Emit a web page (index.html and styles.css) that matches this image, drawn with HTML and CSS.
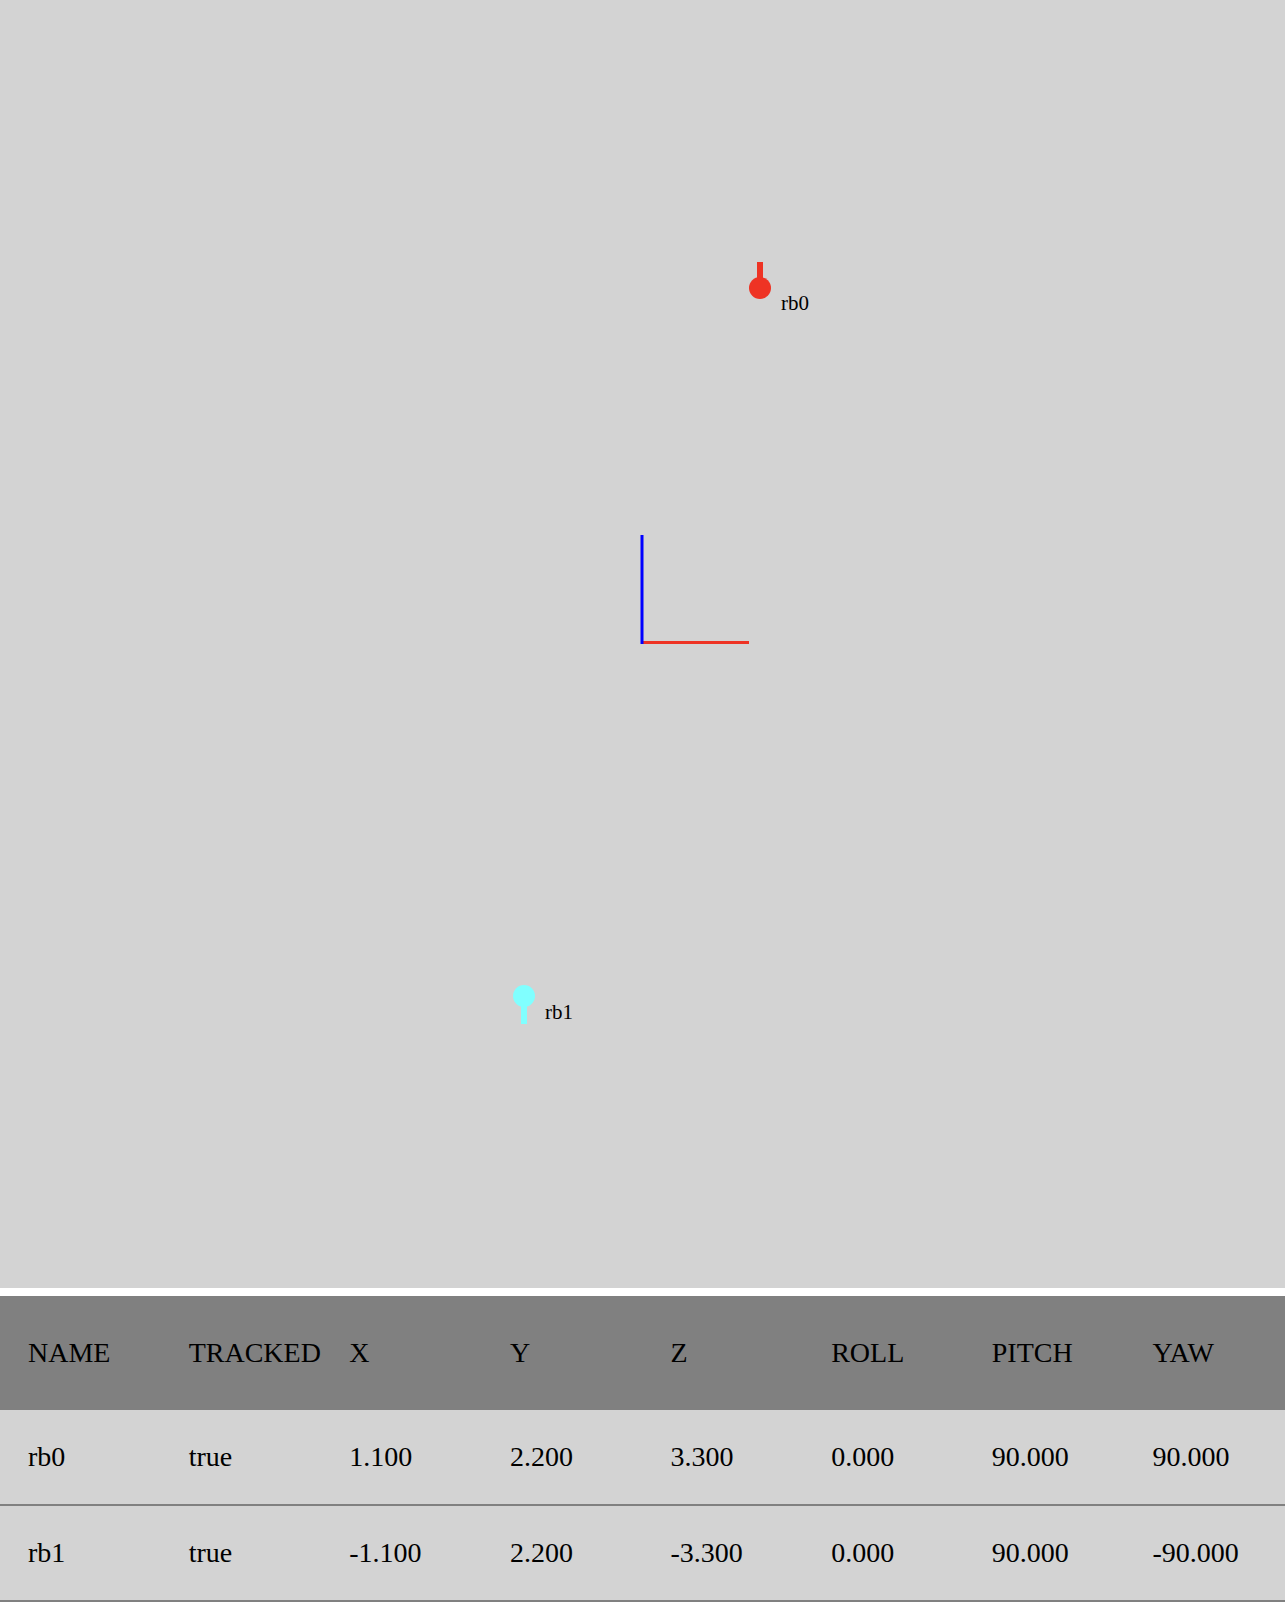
FILE: index.html
```html
<!DOCTYPE html>
<html>
<head>
<meta charset="utf-8">
<title>Rigid Bodies</title>
<link rel="stylesheet" href="styles.css">
</head>
<body>
<div class="viewport">
  <svg class="scene" width="1285" height="1288" viewBox="0 0 1285 1288" xmlns="http://www.w3.org/2000/svg">
    <line class="axis-x" x1="642" y1="642.5" x2="749" y2="642.5"/>
    <line class="axis-z" x1="642" y1="535" x2="642" y2="644"/>
    <g class="body body-0">
      <line x1="760" y1="262" x2="760" y2="288"/>
      <circle cx="760" cy="288" r="11"/>
    </g>
    <text class="label" x="781" y="310">rb0</text>
    <g class="body body-1">
      <line x1="524" y1="996" x2="524" y2="1024"/>
      <circle cx="524" cy="996" r="11"/>
    </g>
    <text class="label" x="545" y="1019">rb1</text>
  </svg>
</div>
<table class="bodies">
  <thead>
    <tr>
      <th>NAME</th><th>TRACKED</th><th>X</th><th>Y</th><th>Z</th><th>ROLL</th><th>PITCH</th><th>YAW</th>
    </tr>
  </thead>
  <tbody>
    <tr>
      <td>rb0</td><td>true</td><td>1.100</td><td>2.200</td><td>3.300</td><td>0.000</td><td>90.000</td><td>90.000</td>
    </tr>
    <tr>
      <td>rb1</td><td>true</td><td>-1.100</td><td>2.200</td><td>-3.300</td><td>0.000</td><td>90.000</td><td>-90.000</td>
    </tr>
  </tbody>
</table>
</body>
</html>
```

FILE: styles.css
```css
html, body {
  margin: 0;
  padding: 0;
  background: #ffffff;
  font-family: "Liberation Serif", "Times New Roman", serif;
  color: #000000;
}

.viewport {
  height: 1288px;
  background: #d3d3d3;
}

.scene {
  display: block;
}

.axis-x {
  stroke: #ee3324;
  stroke-width: 3;
}

.axis-z {
  stroke: #0000ff;
  stroke-width: 3;
}

.body-0 line {
  stroke: #ee3324;
  stroke-width: 6;
}
.body-0 circle {
  fill: #ee3324;
}

.body-1 line {
  stroke: #80ffff;
  stroke-width: 6;
}
.body-1 circle {
  fill: #80ffff;
}

.label {
  font-family: "Liberation Serif", "Times New Roman", serif;
  font-size: 21px;
  fill: #000000;
}

.bodies {
  width: 100%;
  margin-top: 8px;
  border-collapse: collapse;
  table-layout: fixed;
  font-size: 28px;
  line-height: 32px;
}

.bodies th {
  background: #808080;
  font-weight: normal;
  text-align: left;
  padding: 41px 28px;
}

.bodies td {
  background: #d3d3d3;
  text-align: left;
  padding: 31px 28px;
  border-bottom: 2px solid #808080;
}
```
